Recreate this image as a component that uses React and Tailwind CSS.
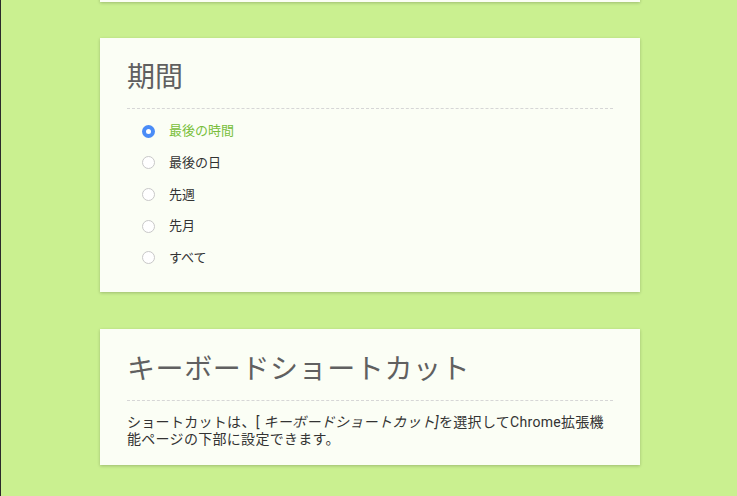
const periods = ["最後の時間", "最後の日", "先週", "先月", "すべて"];

function Card({ className = "", children }) {
  return (
    <section
      className={`bg-[#fbfef5] shadow-[0_1px_3px_rgba(0,0,0,0.22)] px-[27px] ${className}`}
    >
      {children}
    </section>
  );
}

function Radio({ checked }) {
  if (checked) {
    return (
      <span className="w-[13px] h-[13px] rounded-full bg-[#4a8cf7] flex items-center justify-center">
        <span className="w-[5px] h-[5px] rounded-full bg-white" />
      </span>
    );
  }
  return <span className="w-[13px] h-[13px] rounded-full border border-[#c8c8c8] bg-white" />;
}

export default function App() {
  return (
    <div
      className="min-h-[496px] h-[496px] overflow-hidden bg-[#caf090] border-l border-[#2a2a2a]"
      style={{ fontFamily: 'Roboto, "Noto Sans CJK JP", sans-serif' }}
    >
      <div className="w-[540px] ml-[99px] flex flex-col">
        <Card className="-mt-[60px] h-[62px]" />

        <Card className="mt-[36px] pt-[20px] pb-[24px]">
          <h2 className="text-[28px] leading-[40px] text-[#606060] font-normal">期間</h2>
          <div className="mt-[10px] border-t border-dashed border-[#d6d6d6]" />
          <ul className="mt-[12px] flex flex-col gap-[11.7px]">
            {periods.map((p, i) => (
              <li key={p} className="flex items-center h-[20px] pl-[15px]">
                <Radio checked={i === 0} />
                <span
                  className={`ml-[14px] text-[13px] ${
                    i === 0 ? "text-[#79be3b]" : "text-[#333333]"
                  }`}
                >
                  {p}
                </span>
              </li>
            ))}
          </ul>
        </Card>

        <Card className="mt-[37px] pt-[21px] pb-[17px]">
          <h2 className="text-[28px] leading-[40px] text-[#606060] font-normal tracking-[0.6px]">
            キーボードショートカット
          </h2>
          <div className="mt-[10px] border-t border-dashed border-[#d6d6d6]" />
          <p className="mt-[13px] text-[14px] leading-[17px] tracking-[0.3px] text-[#333333]">
            ショートカットは、[ <i>キーボードショートカット]</i>を選択してChrome拡張機能ページの下部に設定できます。
          </p>
        </Card>
      </div>
    </div>
  );
}
